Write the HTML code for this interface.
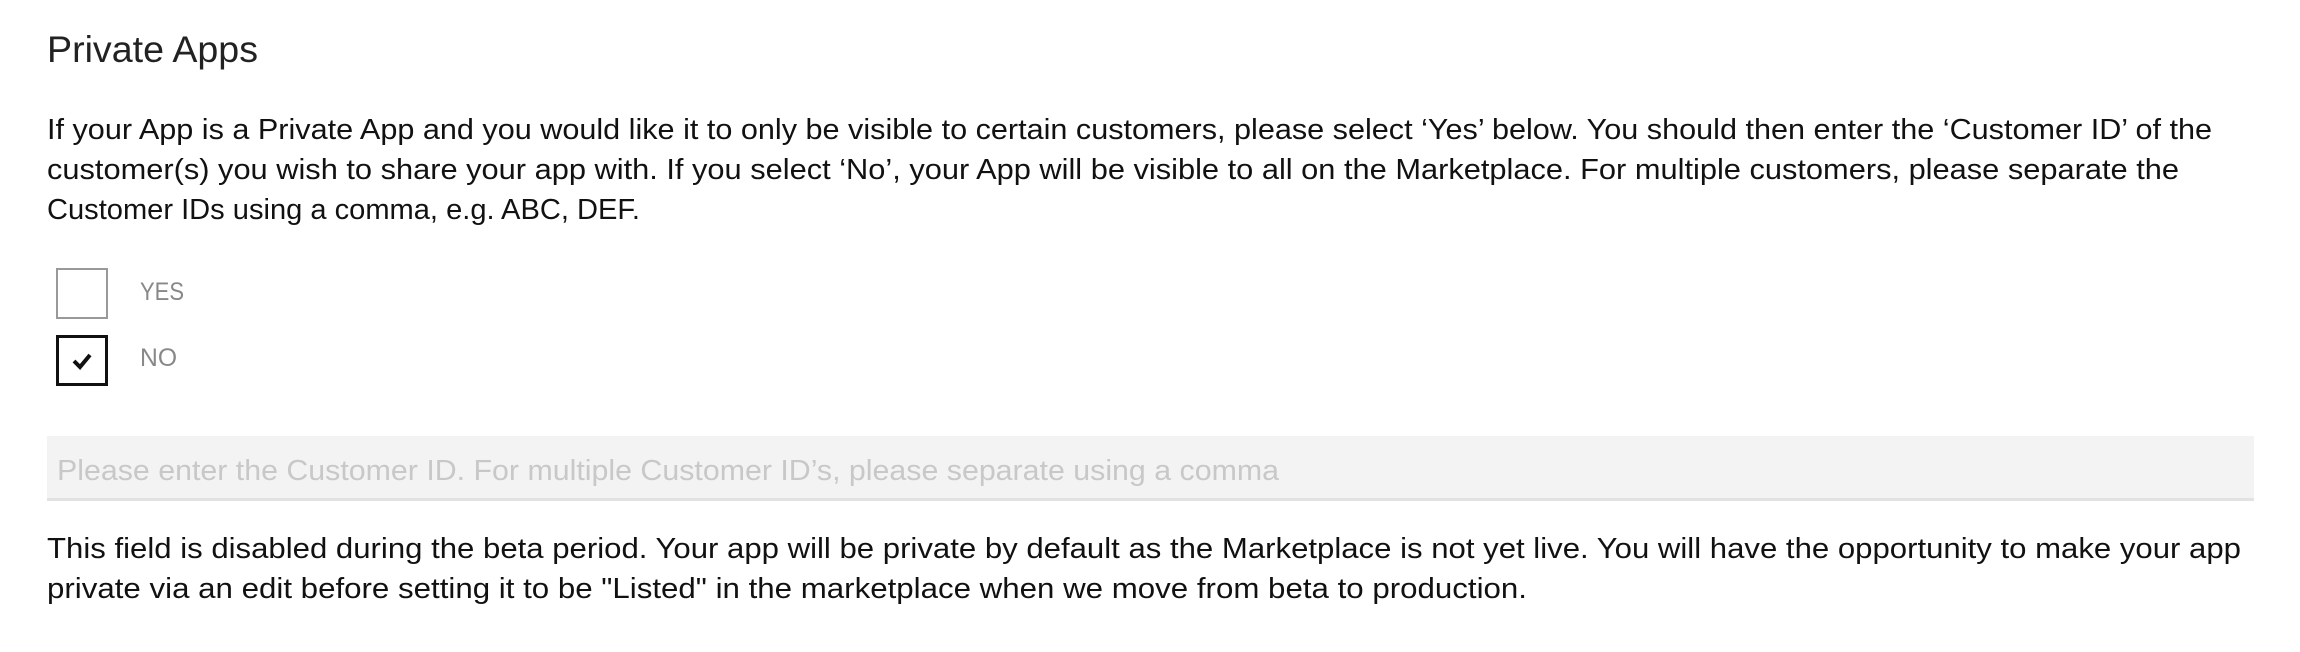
<!DOCTYPE html>
<html><head><meta charset="utf-8"><style>
html,body{margin:0;padding:0;background:#fff;width:2300px;height:652px;overflow:hidden}
body{font-family:"Liberation Sans",sans-serif;color:#111;position:relative}
.t{position:absolute;white-space:nowrap;transform-origin:0 50%;line-height:1}
.box{position:absolute;box-sizing:border-box;width:52px;height:51px}
</style></head><body>
<span class="t fit" style="left:47px;top:31px;font-size:37px;color:#222">Private Apps</span>
<span class="t fit" style="left:47px;top:116px;font-size:29px">If your App is a Private App and you would like it to only be visible to certain customers, please select ‘Yes’ below. You should then enter the ‘Customer ID’ of the</span>
<span class="t fit" style="left:47px;top:156px;font-size:29px">customer(s) you wish to share your app with. If you select ‘No’, your App will be visible to all on the Marketplace. For multiple customers, please separate the</span>
<span class="t fit" style="left:47px;top:196px;font-size:29px">Customer IDs using a comma, e.g. ABC, DEF.</span>
<div class="box" style="left:56px;top:268px;border:2px solid #999"></div>
<span class="t fit" style="left:140px;top:280px;font-size:25px;color:#888">YES</span>
<div class="box" style="left:56px;top:335px;border:3px solid #111">
<svg width="46" height="45" viewBox="0 0 46 45" style="position:absolute;left:0;top:0"><path d="M15 23 L21 29 L31 17" stroke="#111" stroke-width="4" fill="none"/></svg></div>
<span class="t fit" style="left:140px;top:346px;font-size:25px;color:#888">NO</span>
<div style="position:absolute;left:47px;top:436px;width:2207px;height:62px;background:#f3f3f3;border-bottom:3px solid #e2e2e2;box-sizing:content-box"></div>
<span class="t fit" style="left:57px;top:457px;font-size:29px;color:#c8c8c8">Please enter the Customer ID. For multiple Customer ID’s, please separate using a comma</span>
<span class="t fit" style="left:47px;top:535px;font-size:29px">This field is disabled during the beta period. Your app will be private by default as the Marketplace is not yet live. You will have the opportunity to make your app</span>
<span class="t fit" style="left:47px;top:575px;font-size:29px">private via an edit before setting it to be "Listed" in the marketplace when we move from beta to production.</span>
<script>
var W=[211,2165,2132,593,44,37,1222,2194,1480];
var els=document.querySelectorAll('.fit');
for(var i=0;i<els.length;i++){var w=els[i].getBoundingClientRect().width;els[i].style.transform='scaleX('+(W[i]/w)+')';}
</script>
</body></html>
